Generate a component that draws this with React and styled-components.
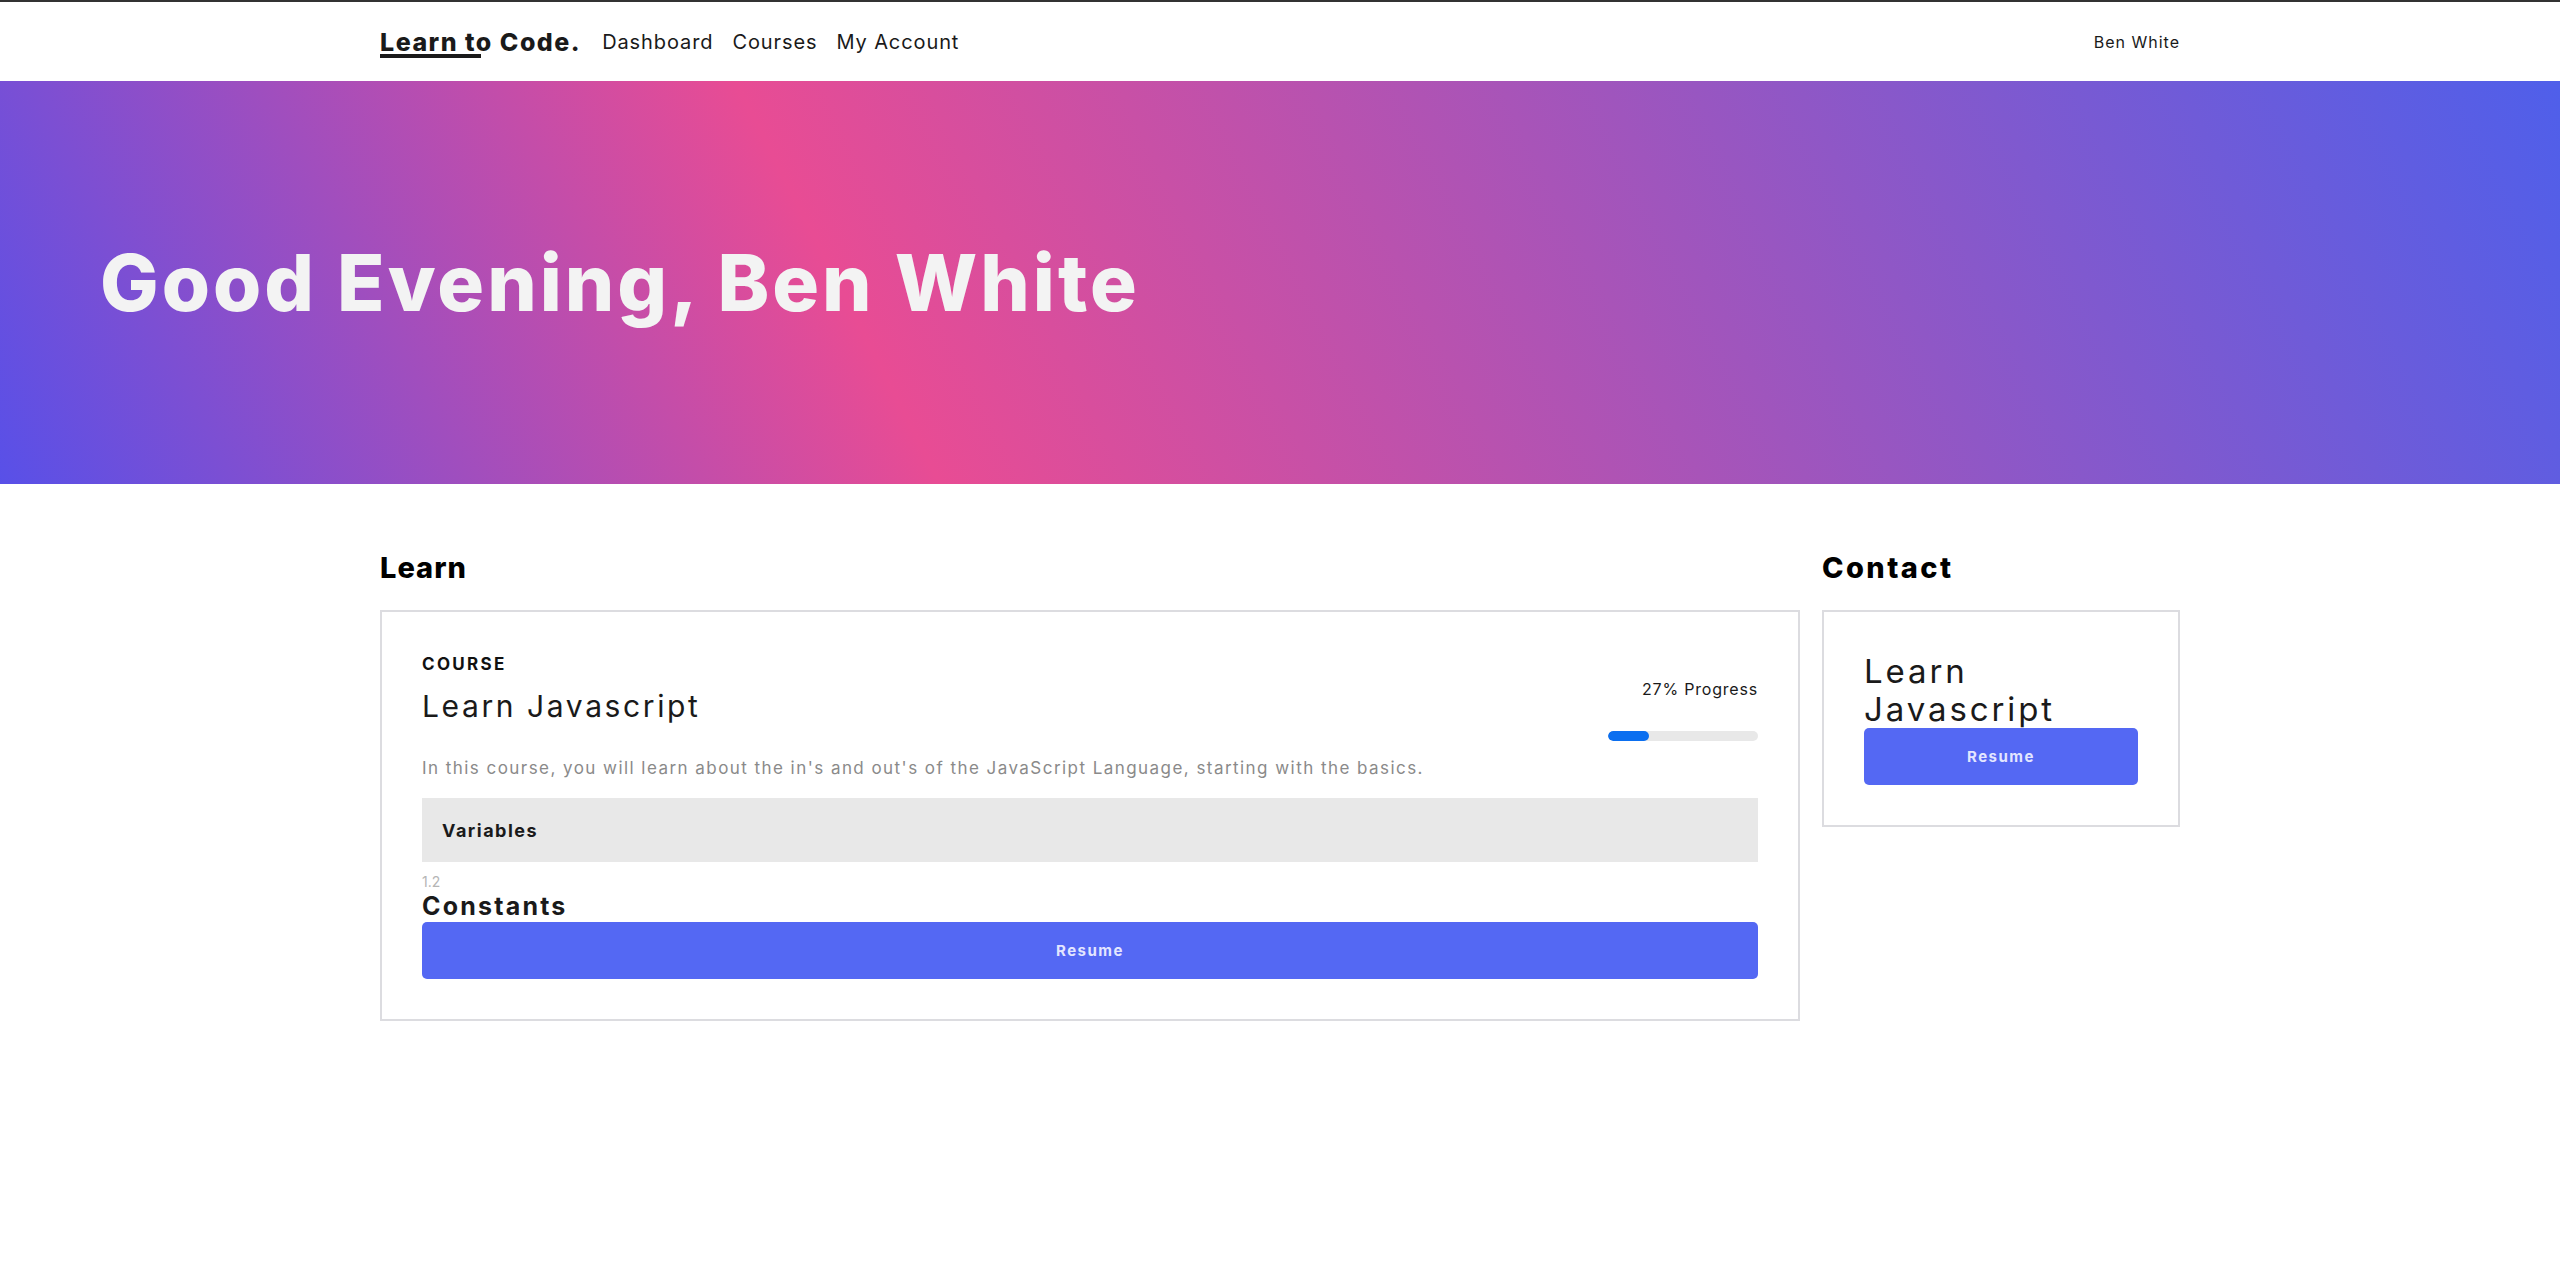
import React from 'react';
import styled, { createGlobalStyle } from 'styled-components';

const GlobalStyle = createGlobalStyle`
  * { box-sizing: border-box; }
  body {
    margin: 0;
    font-family: 'Inter', 'Liberation Sans', sans-serif;
    color: #111;
    background: #fff;
    border-top: 2px solid #333;
  }
`;

const Container = styled.div`
  width: 1800px;
  margin: 0 auto;
`;

const Nav = styled.nav`
  height: 79px;
  background: #fff;
`;

const NavInner = styled(Container)`
  height: 100%;
  display: flex;
  align-items: center;
  justify-content: space-between;
`;

const NavLeft = styled.div`
  display: flex;
  align-items: center;
  gap: 19px;
`;

const Logo = styled.a`
  position: relative;
  font-size: 25px;
  font-weight: 800;
  color: #1a1a1a;
  letter-spacing: 1.5px;
  margin-right: 2px;

  &::after {
    content: '';
    position: absolute;
    left: 0;
    bottom: -1px;
    width: 101px;
    height: 4px;
    background: #1a1a1a;
  }
`;

const NavLink = styled.a`
  font-size: 20px;
  letter-spacing: 0.9px;
  color: #1a1a1a;
  text-decoration: none;
`;

const UserName = styled.span`
  font-size: 16px;
  letter-spacing: 1px;
  color: #1a1a1a;
`;

const Hero = styled.header`
  height: 403px;
  display: flex;
  align-items: center;
  padding-left: 100px;
  background: linear-gradient(63deg, #5850e8 0%, #e84c94 34%, #4f5fea 100%);
`;

const HeroTitle = styled.h1`
  margin: 0;
  font-size: 78px;
  font-weight: 800;
  color: #f3f3f3;
  letter-spacing: 3px;
`;

const Main = styled(Container)`
  display: grid;
  grid-template-columns: 1420px 358px;
  gap: 22px;
  padding-top: 64px;
  align-items: start;
`;

const Column = styled.section``;

const SectionTitle = styled.h2`
  margin: 0 0 22px;
  font-size: 29px;
  font-weight: 800;
  line-height: 40px;
  letter-spacing: ${p => p.$spacing || 1}px;
  color: #000;
`;

const Card = styled.div`
  border: 2px solid #dcdce0;
  padding: 40px;
`;

const CardTop = styled.div`
  display: flex;
  justify-content: space-between;
  align-items: flex-start;
`;

const Label = styled.div`
  font-size: 17px;
  font-weight: 700;
  line-height: 24px;
  letter-spacing: 2.3px;
  text-transform: uppercase;
`;

const CourseTitle = styled.h3`
  margin: 10px 0 0;
  font-size: 30px;
  font-weight: 400;
  line-height: 40px;
  letter-spacing: 2.6px;
  color: #1a1a1a;
`;

const Progress = styled.div`
  width: 150px;
  padding-top: 27px;
  text-align: right;
`;

const ProgressText = styled.div`
  font-size: 16px;
  line-height: 20px;
  letter-spacing: 0.8px;
  color: #1a1a1a;
`;

const Track = styled.div`
  margin-top: 32px;
  height: 10px;
  border-radius: 5px;
  background: #e8e8e8;
  overflow: hidden;
`;

const Fill = styled.div`
  height: 100%;
  border-radius: 5px;
  background: #0b6ff0;
`;

const Description = styled.p`
  margin: 15px 0 0;
  font-size: 17px;
  line-height: 24px;
  letter-spacing: 1.45px;
  color: #8a8a8a;
`;

const Lesson = styled.div`
  margin-top: 18px;
  height: 64px;
  display: flex;
  align-items: center;
  padding: 0 20px;
  background: #e8e8e8;
  font-size: 18px;
  font-weight: 700;
  letter-spacing: 1.5px;
  color: #1a1a1a;
`;

const LessonNumber = styled.div`
  margin-top: 12px;
  font-size: 14px;
  line-height: 16px;
  color: #b5b5b5;
`;

const LessonTitle = styled.div`
  font-size: 25px;
  font-weight: 700;
  line-height: 32px;
  letter-spacing: 2.2px;
  color: #1a1a1a;
`;

const Button = styled.button`
  display: block;
  width: 100%;
  height: 57px;
  border: none;
  border-radius: 5px;
  background: #5468f3;
  color: #e3e6ff;
  font-family: inherit;
  font-size: 15px;
  font-weight: 700;
  letter-spacing: 1.5px;
  cursor: pointer;
`;

const ContactTitle = styled.h3`
  margin: 0;
  font-size: 33px;
  font-weight: 400;
  line-height: 38px;
  letter-spacing: 2.9px;
  color: #1a1a1a;
`;

function App() {
  const progress = 27;

  return (
    <>
      <GlobalStyle />
      <Nav>
        <NavInner>
          <NavLeft>
            <Logo>Learn to Code.</Logo>
            <NavLink>Dashboard</NavLink>
            <NavLink>Courses</NavLink>
            <NavLink>My Account</NavLink>
          </NavLeft>
          <UserName>Ben White</UserName>
        </NavInner>
      </Nav>

      <Hero>
        <HeroTitle>Good Evening, Ben White</HeroTitle>
      </Hero>

      <Main>
        <Column>
          <SectionTitle>Learn</SectionTitle>
          <Card>
            <CardTop>
              <div>
                <Label>Course</Label>
                <CourseTitle>Learn Javascript</CourseTitle>
              </div>
              <Progress>
                <ProgressText>{progress}% Progress</ProgressText>
                <Track>
                  <Fill style={{ width: `${progress}%` }} />
                </Track>
              </Progress>
            </CardTop>
            <Description>
              In this course, you will learn about the in's and out's of the JavaScript Language, starting with the basics.
            </Description>
            <Lesson>Variables</Lesson>
            <LessonNumber>1.2</LessonNumber>
            <LessonTitle>Constants</LessonTitle>
            <Button>Resume</Button>
          </Card>
        </Column>

        <Column>
          <SectionTitle $spacing={2.4}>Contact</SectionTitle>
          <Card>
            <ContactTitle>Learn Javascript</ContactTitle>
            <Button>Resume</Button>
          </Card>
        </Column>
      </Main>
    </>
  );
}

export default App;
